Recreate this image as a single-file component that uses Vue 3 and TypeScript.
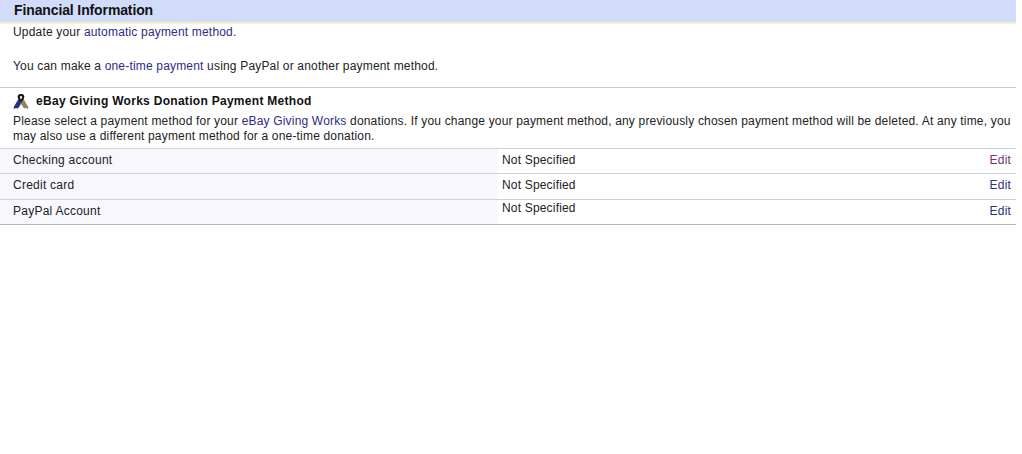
<template>
  <div class="page">
    <div class="title-bar">Financial Information</div>

    <div class="intro">
      <p>Update your <a class="link">automatic payment method.</a></p>
      <p class="second">You can make a <a class="link">one-time payment</a> using PayPal or another payment method.</p>
    </div>

    <section class="giving">
      <h3 class="giving-head">
        <svg class="ribbon" width="16" height="17" viewBox="0 0 16 17">
          <path d="M5.5 6 L1 13.5 L0.5 16 L3 15 L5 15.5 L9.5 8.5 Z" fill="#1f2f86" />
          <path d="M10.5 6 L15 13.5 L15.5 16 L13 15 L11 15.5 L6.5 8.5 Z" fill="#8c8660" />
          <path d="M8 1 C5 1 4.2 3 5 5.5 L8 10 L11 5.5 C11.8 3 11 1 8 1 Z M8 3 C9.2 3 9.4 4 8.9 5 L8 6.6 L7.1 5 C6.6 4 6.8 3 8 3 Z" fill="#17171d" fill-rule="evenodd" />
        </svg>
        <span>eBay Giving Works Donation Payment Method</span>
      </h3>
      <p class="desc">
        Please select a payment method for your <a class="link">eBay Giving Works</a> donations. If you change your payment method, any previously chosen payment method will be deleted. At any time, you may also use a different payment method for a one-time donation.
      </p>
    </section>

    <div class="methods">
      <div v-for="row in rows" :key="row.name" class="method-row">
        <div class="method-name">{{ row.name }}</div>
        <div class="method-value" :class="{ raised: row.raised }">Not Specified</div>
        <a class="edit" :class="{ visited: row.visited }">Edit</a>
      </div>
    </div>
  </div>
</template>

<script setup lang="ts">
interface MethodRow {
  name: string;
  visited?: boolean;
  raised?: boolean;
}

const rows: MethodRow[] = [
  { name: 'Checking account', visited: true },
  { name: 'Credit card' },
  { name: 'PayPal Account', raised: true },
];
</script>

<style>
html,
body {
  background: #fff;
}
</style>

<style scoped>
.page {
  width: 1016px;
  font-family: "Liberation Sans", Arial, sans-serif;
  font-size: 12px;
  letter-spacing: 0.18px;
  color: #222;
}

p {
  margin: 0;
}

.link {
  color: #2f2a86;
}

.title-bar {
  height: 22px;
  line-height: 21px;
  padding-left: 14px;
  background: #d1dcfa;
  border-bottom: 2px solid #f3f1c8;
  font-size: 14px;
  font-weight: bold;
  letter-spacing: -0.12px;
  color: #111;
}

.intro {
  padding: 0 13px;
  height: 63px;
  line-height: 14px;
  border-bottom: 1px solid #c8c8c8;
}

.intro p {
  padding-top: 1px;
}

.intro .second {
  padding-top: 20px;
}

.giving {
  padding: 0 5px 0 13px;
}

.giving-head {
  display: flex;
  align-items: center;
  gap: 7px;
  margin: 0;
  height: 26px;
  font-size: 12px;
  font-weight: bold;
  letter-spacing: 0.29px;
  color: #111;
}

.ribbon {
  flex: none;
}

.desc {
  line-height: 15px;
  height: 34px;
}

.methods {
  border-bottom: 1px solid #b4b4b4;
}

.method-row {
  display: flex;
  box-sizing: border-box;
  height: 25px;
  line-height: 22px;
  border-top: 1px solid #d2d1da;
}

.method-row:nth-child(2) {
  height: 26px;
}

.method-name {
  width: 485px;
  padding-left: 13px;
  background: #f8f7fe;
  letter-spacing: 0.25px;
}

.method-value {
  flex: 1;
  padding-left: 4px;
}

.method-value.raised {
  margin-top: -3px;
}

.edit {
  padding-right: 5px;
  color: #2f2a86;
}

.edit.visited {
  color: #7b2d7d;
}
</style>
